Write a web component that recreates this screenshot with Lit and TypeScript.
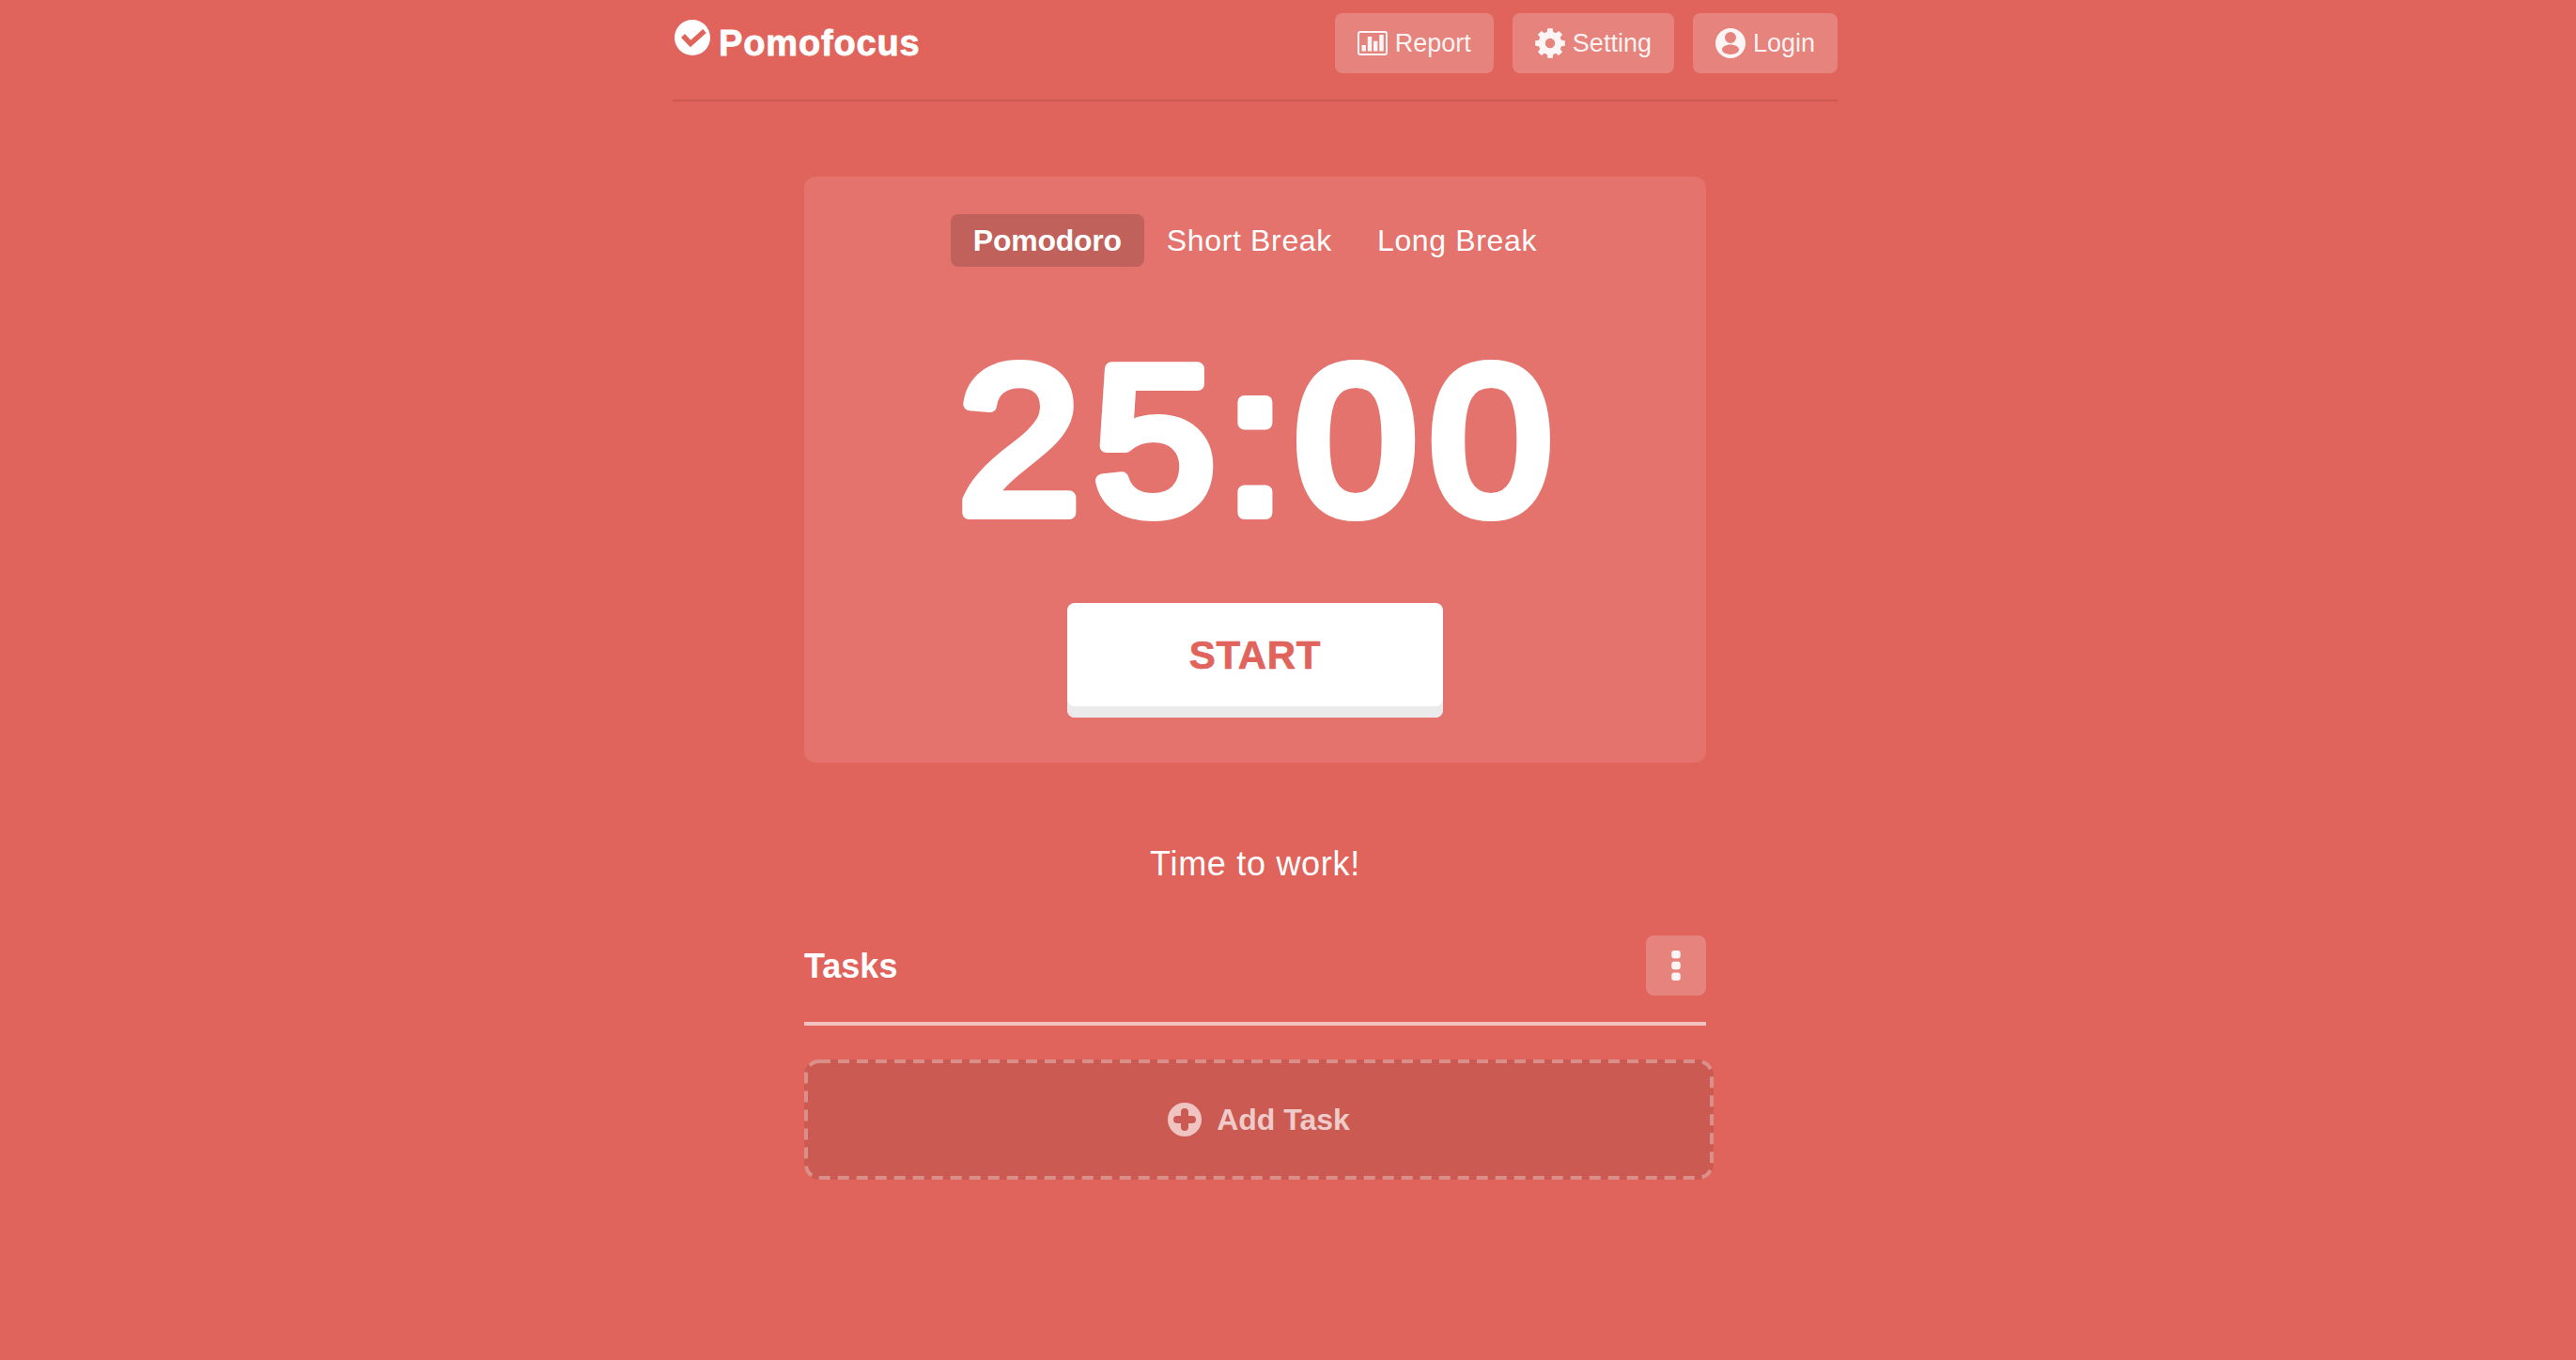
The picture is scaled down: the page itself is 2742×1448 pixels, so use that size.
import { LitElement, html, css, svg } from "lit";
import { customElement } from "lit/decorators.js";

function gearPath(): string {
  const teeth = 8, cx = 16, cy = 16, outer = 16, root = 12.4, hole = 5.2;
  const pt = (r: number, a: number) => `${(cx + r * Math.cos(a)).toFixed(2)} ${(cy + r * Math.sin(a)).toFixed(2)}`;
  let d = "";
  for (let i = 0; i < teeth; i++) {
    const c = (i / teeth) * Math.PI * 2 - Math.PI / 2;
    const s = (Math.PI * 2) / teeth;
    const parts = [pt(root, c - s * 0.34), pt(outer, c - s * 0.22), pt(outer, c + s * 0.22), pt(root, c + s * 0.34)];
    d += (i === 0 ? "M" : "L") + parts.join("L");
  }
  d += `Z M${cx + hole} ${cy}a${hole} ${hole} 0 1 0 ${-2 * hole} 0a${hole} ${hole} 0 1 0 ${2 * hole} 0Z`;
  return d;
}

@customElement("app-root")
export class AppRoot extends LitElement {
  static styles = css`
    :host { display: block; min-height: 1448px; box-sizing: border-box; padding-right: 70px; background: #e0645c; color: #fff; font-family: "Liberation Sans", Arial, sans-serif; }
    .page { width: 1240px; margin: 0 auto; }
    header { height: 106px; border-bottom: 2px solid rgba(0,0,0,.1); display: flex; justify-content: space-between; align-items: flex-start; }
    .logo { display: flex; align-items: flex-start; gap: 9px; padding: 21px 0 0 2px; font-weight: 700; font-size: 38px; line-height: 50px; letter-spacing: .85px; -webkit-text-stroke: .8px #fff; }
    .logo svg { width: 38px; height: 38px; }
    .nbtn { height: 64px; border-radius: 8px; background: rgba(255,255,255,.2); display: flex; align-items: center; gap: 8px; padding: 0 24px; font-size: 27px; color: rgba(255,255,255,.92); box-sizing: border-box; }
    nav { display: flex; gap: 20px; padding-top: 14px; }
    .nbtn svg { display: block; flex: none; }
    .card { width: 960px; height: 624px; margin: 80px auto 0; background: rgba(255,255,255,.1); border-radius: 12px; padding-top: 40px; box-sizing: border-box; display: flex; flex-direction: column; align-items: center; }
    .tabs { display: flex; height: 56px; align-items: center; font-size: 32px; letter-spacing: .65px; }
    .tab { height: 56px; padding: 0 24px; line-height: 56px; border-radius: 8px; }
    .tab.on { background: rgba(0,0,0,.15); font-weight: 700; letter-spacing: -.25px; }
    .time { display: block; margin-top: 76px; overflow: visible; }
    .time text { font-family: "Liberation Sans", Arial, sans-serif; font-size: 222px; font-weight: 400; letter-spacing: 13.5px; fill: #fff; stroke: #fff; stroke-width: 14px; stroke-linejoin: round; stroke-linecap: round; text-anchor: middle; }
    .start { width: 400px; height: 122px; margin-top: 72px; background: #fff; border-radius: 8px; box-shadow: inset 0 -12px 0 #ebebeb; color: #e0645c; font-size: 42px; font-weight: 700; letter-spacing: .7px; display: flex; align-items: center; justify-content: center; padding-bottom: 10px; box-sizing: border-box; -webkit-text-stroke: .7px #e0645c; }
    .msg { text-align: center; font-size: 36px; line-height: 44px; margin-top: 86px; letter-spacing: .7px; }
    .tasks { width: 960px; margin: 0 auto; }
    .thead { display: flex; justify-content: space-between; align-items: center; height: 64px; margin-top: 54px; padding-bottom: 28px; border-bottom: 4px solid rgba(255,255,255,.6); }
    .ttitle { font-size: 36px; font-weight: 700; padding-top: 2px; }
    .more { width: 64px; height: 64px; background: rgba(255,255,255,.2); border-radius: 8px; display: flex; align-items: center; justify-content: center; }
    .add { position: relative; width: 968px; height: 128px; margin-top: 36px; box-sizing: border-box; border-radius: 16px; background: #cb5b52; display: flex; align-items: center; justify-content: center; gap: 16px; font-size: 32px; font-weight: 700; color: rgba(255,255,255,.7); }
    .dash { position: absolute; inset: 0; }
    .dash rect { fill: none; stroke: rgba(255,255,255,.32); stroke-width: 4px; stroke-dasharray: 12 8; }
    .disc { fill: #f0c5c1; }
    .plus { stroke: #cb5b52; stroke-width: 8px; stroke-linecap: round; fill: none; }
    .ic { fill: rgba(255,255,255,.92); }
    .frame { fill: none; stroke: rgba(255,255,255,.92); stroke-width: 2px; }
    .tick { fill: none; stroke: #e0645c; stroke-width: 5.5px; }
  `;

  render() {
    return html`<div class="page">
      <header>
        <div class="logo">
          <svg viewBox="0 0 38 38"><circle cx="19" cy="19" r="19" fill="#fff"/><path class="tick" d="M9 17l8 8.500 15-13.500"/></svg>
          <span>Pomofocus</span>
        </div>
        <nav>
          <div class="nbtn">
            <svg width="32" height="26" viewBox="0 0 32 26"><rect class="frame" x="1" y="1" width="30" height="24" rx="2"/><path class="ic" d="M4.500 15h4.400v6.500H4.500zM10.800 6h4.400v15.500h-4.400zM17 10.700h4.400v10.800H17zM23.300 4h4.400v17.500h-4.400z"/></svg>
            <span>Report</span>
          </div>
          <div class="nbtn">
            <svg width="32" height="32" viewBox="0 0 32 32"><path class="ic" fill-rule="evenodd" d="${gearPath()}"/></svg>
            <span>Setting</span>
          </div>
          <div class="nbtn">
            <svg width="32" height="32" viewBox="0 0 32 32"><path class="ic" fill-rule="evenodd" d="M16 0a16 16 0 1 0 0 32 16 16 0 0 0 0-32zM16 4a6 6 0 1 1 0 12 6 6 0 0 1 0-12zM16 17.500c5 0 9 2.300 9 5.200s-4 5.200-9 5.200-9-2.300-9-5.200 4-5.200 9-5.200z"/></svg>
            <span>Login</span>
          </div>
        </nav>
      </header>
      <div class="card">
        <div class="tabs">
          <div class="tab on">Pomodoro</div>
          <div class="tab">Short Break</div>
          <div class="tab">Long Break</div>
        </div>
        <svg class="time" width="700" height="210" viewBox="0 0 700 210">
          <g transform="translate(357 186) scale(1.05 1)">${svg`<text>25<tspan dx="-4">:</tspan><tspan dx="-4">00</tspan></text>`}</g>
        </svg>
        <div class="start">START</div>
      </div>
      <div class="msg">Time to work!</div>
      <div class="tasks">
        <div class="thead">
          <span class="ttitle">Tasks</span>
          <div class="more"><svg width="10" height="32" viewBox="0 0 10 32"><rect class="ic" width="9.500" height="8.500" rx="3" x=".25" y="0"/><rect class="ic" width="9.500" height="8.500" rx="3" x=".25" y="11.750"/><rect class="ic" width="9.500" height="8.500" rx="3" x=".25" y="23.500"/></svg></div>
        </div>
        <div class="add">
          <svg class="dash" width="968" height="128" viewBox="0 0 968 128"><rect x="2" y="2" width="964" height="124" rx="14"/></svg>
          <svg width="36" height="36" viewBox="0 0 36 36"><circle class="disc" cx="18" cy="18" r="18"/><path class="plus" d="M10 18h16M18 10v16"/></svg>
          <span>Add Task</span>
        </div>
      </div>
    </div>`;
  }
}
